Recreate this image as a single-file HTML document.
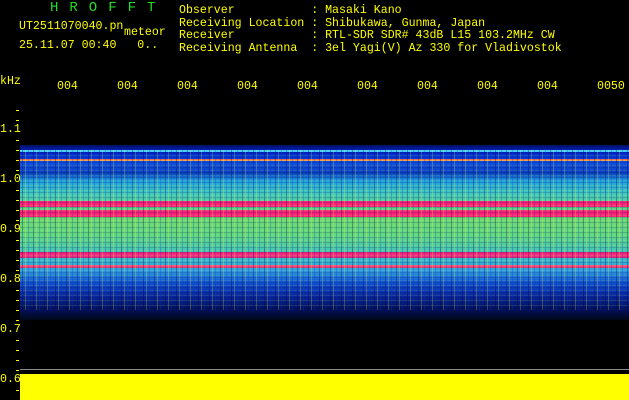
<!DOCTYPE html>
<html><head><style>
body{margin:0;width:629px;height:400px;background:#000;overflow:hidden;position:relative;font-family:"Liberation Mono",monospace;color:#ff0}
.t{position:absolute;font-size:11.6px;line-height:12.5px;white-space:pre}
.spec{position:absolute;left:20px;right:0;top:145px;height:175px;
background:
linear-gradient(to bottom,transparent 0,transparent 5px,#4cf 5px,#4cf 7px,transparent 7px,transparent 14px,#e55 14px,#fa3 16px,transparent 16px,transparent 56px,#f27 56px,#f27 62px,transparent 62px,transparent 65px,#f27 65px,#f27 72px,transparent 72px,transparent 107px,#f27 107px,#e38 113px,transparent 113px,transparent 120px,#f47 120px,#f47 123px,transparent 123px),
linear-gradient(to bottom,#001060 0,#0020c0 6px,#0030d0 10px,#1050e0 18px,#0a40c0 28px,#20a0e0 36px,#40c8c0 48px,#70d870 70px,#60d880 90px,#40c0c0 110px,#30a0e0 125px,#1050d0 138px,#0828a0 150px,#041058 165px,#000818 175px);}
.noise{position:absolute;left:20px;right:0;top:150px;height:160px;opacity:.45;
background:repeating-linear-gradient(90deg,transparent 0 2px,rgba(0,0,90,.7) 2px 3px,transparent 3px 5px,rgba(255,255,80,.5) 5px 6px,transparent 6px 8px,rgba(0,60,200,.6) 8px 9px,transparent 9px 11px),
repeating-linear-gradient(0deg,transparent 0 2px,rgba(0,0,80,.4) 2px 3px,transparent 3px 4px,rgba(200,255,100,.3) 4px 5px);}
.yel{position:absolute;left:20px;right:0;top:374px;bottom:0;background:#ff0}
.line{position:absolute;left:20px;right:0;top:369px;height:1px;background:#888}
.tick{position:absolute;left:16px;width:3px;height:1px;background:#ff0}
</style></head><body>
<div class="t" style="left:50px;top:2px;color:#2d2;font-size:14px;letter-spacing:11px">HROFFT</div>
<div class="t" style="left:19px;top:21px">UT2511070040.pn</div>
<div class="t" style="left:124px;top:27px">meteor</div>
<div class="t" style="left:19px;top:40px">25.11.07 00:40   0..</div>
<div class="t" style="left:179px;top:5px">Observer           : Masaki Kano
Receiving Location : Shibukawa, Gunma, Japan
Receiver           : RTL-SDR SDR# 43dB L15 103.2MHz CW
Receiving Antenna  : 3el Yagi(V) Az 330 for Vladivostok</div>
<div class="t" style="left:0;top:76px">kHz</div>
<div class="t" style="left:57px;top:81px">004</div><div class="t" style="left:117px;top:81px">004</div><div class="t" style="left:177px;top:81px">004</div><div class="t" style="left:237px;top:81px">004</div><div class="t" style="left:297px;top:81px">004</div><div class="t" style="left:357px;top:81px">004</div><div class="t" style="left:417px;top:81px">004</div><div class="t" style="left:477px;top:81px">004</div><div class="t" style="left:537px;top:81px">004</div><div class="t" style="left:597px;top:81px">0050</div>
<div class="spec"></div><div class="noise"></div>
<div class="line"></div><div class="yel"></div>
<div class="t" style="left:0;top:124px">1.1</div>
<div class="t" style="left:0;top:174px">1.0</div>
<div class="t" style="left:0;top:224px">0.9</div>
<div class="t" style="left:0;top:274px">0.8</div>
<div class="t" style="left:0;top:324px">0.7</div>
<div class="t" style="left:0;top:374px">0.6</div>
<div class="tick" style="top:110px"></div><div class="tick" style="top:120px"></div><div class="tick" style="top:140px"></div><div class="tick" style="top:150px"></div><div class="tick" style="top:160px"></div><div class="tick" style="top:170px"></div><div class="tick" style="top:190px"></div><div class="tick" style="top:200px"></div><div class="tick" style="top:210px"></div><div class="tick" style="top:220px"></div><div class="tick" style="top:240px"></div><div class="tick" style="top:250px"></div><div class="tick" style="top:260px"></div><div class="tick" style="top:270px"></div><div class="tick" style="top:290px"></div><div class="tick" style="top:300px"></div><div class="tick" style="top:310px"></div><div class="tick" style="top:320px"></div><div class="tick" style="top:340px"></div><div class="tick" style="top:350px"></div><div class="tick" style="top:360px"></div><div class="tick" style="top:370px"></div><div class="tick" style="top:390px"></div>
</body></html>
